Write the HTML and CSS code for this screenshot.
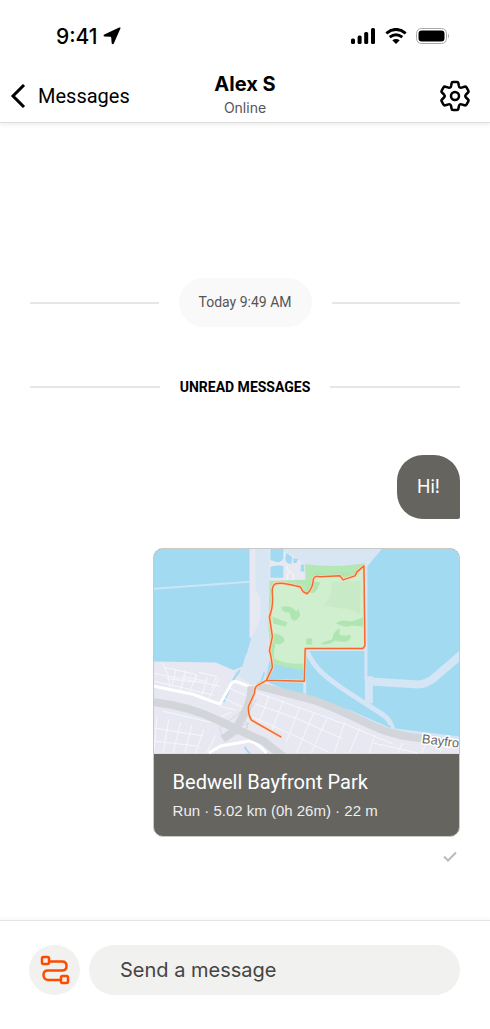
FILE: index.html
```html
<!DOCTYPE html>
<html lang="en">
<head>
<meta charset="utf-8">
<meta name="viewport" content="width=device-width, initial-scale=1">
<title>Alex S – Messages</title>
<link rel="stylesheet" href="styles.css">
</head>
<body>
<div class="screen">
  <header class="top">
    <div class="status">
      <div class="status-group clock">
        <span>9:41</span>
        <svg width="18" height="18" viewBox="0 0 18 18" aria-hidden="true"><path d="M17.500 1.200 10.700 16.800Q9.600 17.800 8.700 16.400L8.200 10.600Q8.100 9.800 7.300 9.800L1.300 9.400Q-.2 8.600 1.300 7.600L16.200.6Q17.900.1 17.500 1.200Z"/></svg>
      </div>
      <div class="status-group">
        <svg width="26" height="16" viewBox="0 0 26 16" aria-hidden="true"><rect x="1" y="10.500" width="4" height="5.500" rx="1.500"/><rect x="7.600" y="7.500" width="4" height="8.500" rx="1.500"/><rect x="14.200" y="4" width="4" height="12" rx="1.500"/><rect x="21" y="0" width="4" height="16" rx="1.500"/></svg>
        <svg class="wifi" width="22" height="16" viewBox="0 0 22 16" aria-hidden="true"><path d="M1.300 5.300Q11-2.400 20.700 5.300M4.700 9.100Q11 4.300 17.300 9.100"/><path class="solid" d="M7.300 12.200Q11 9.600 14.700 12.200L11 16Z"/></svg>
        <svg width="34" height="16" viewBox="0 0 34 16" aria-hidden="true"><rect class="shell" x=".5" y=".5" width="30" height="15" rx="5"/><rect x="2.500" y="2.500" width="26" height="11" rx="3.300"/><path class="tip" d="M32 5.500Q34 8 32 10.500Z"/></svg>
      </div>
    </div>
    <nav class="bar">
      <a class="back" href="#messages">
        <svg width="16" height="24" viewBox="0 0 16 24" aria-hidden="true"><path d="M14 1 3 12 14 23"/></svg>
        <span>Messages</span>
      </a>
      <div class="who"><h1>Alex S</h1><p>Online</p></div>
      <button class="settings" type="button" aria-label="Settings">
        <svg width="30" height="32" viewBox="0 0 30 32" aria-hidden="true"><path d="M13 2H17Q18.200 2 18.400 3.200L18.900 6Q19.400 8.200 21.500 7.600L24.600 6.700Q25.900 6.400 26.500 7.400L28.300 10.600Q28.900 11.600 28 12.500L26 14.500Q24.600 16 26 17.500L28 19.500Q28.900 20.400 28.300 21.400L26.500 24.600Q25.900 25.600 24.600 25.300L21.500 24.400Q19.400 23.800 18.900 26L18.400 28.800Q18.200 30 17 30H13Q11.800 30 11.600 28.800L11.100 26Q10.600 23.800 8.500 24.400L5.400 25.300Q4.100 25.600 3.500 24.600L1.700 21.400Q1.100 20.400 2 19.500L4 17.500Q5.400 16 4 14.500L2 12.500Q1.100 11.600 1.700 10.600L3.500 7.400Q4.100 6.400 5.400 6.700L8.500 7.600Q10.600 8.200 11.100 6L11.600 3.200Q11.800 2 13 2Z"/><circle cx="15" cy="16" r="4"/></svg>
      </button>
    </nav>
  </header>

  <main class="chat">
    <div class="divider"><time class="date">Today 9:49 AM</time></div>
    <div class="divider unread"><h2>UNREAD MESSAGES</h2></div>
    <p class="bubble">Hi!</p>
    <a class="card" href="#activity">
      <svg class="map" viewBox="0 0 307 206" role="img" aria-label="Map of the run">
        <rect class="land" width="307" height="206"/>
        <path class="water" d="M0 0H96V88L94 101 89 118 80 122 62 114 0 113Z"/>
        <path class="channel-fill" d="M102 0H116V32L115 100 119 122 112 134 98 136 80 125 89 118 94 101 99 88 107 70V50L102 40Z"/>
        <path class="channel-fill" d="M122 0H229L212 20 153 17 141 7Z"/>
        <path class="water" d="M117 0H130V9Q128 14 123 13L117 11ZM117 18Q123 16 130 17V29H117ZM133 4 139 8 138 15Q132 15 132 9ZM140 9 145 10 143 14 140 14ZM148 15 151 16V23L147 22ZM229 0H307V189L240 181 197 161 147 148 112 133 116 112 152 100 210 98 212 20Z"/>
        <path class="causeway" d="M0 40 96 33"/>
        <path class="paths" d="M134 31V25L137 23 134 20V17M137 23 140 26V31"/>
        <path class="park-edge" d="M116 32 152 31V15Q165 17 180 17T212 14L213 101H153V122Q137 120 118 115L115 80Z"/>
        <path class="park" d="M121 36Q135 34 147 39L151 46 158 40 161 29 188 28 190 32 203 28 211 18V99H151V115Q135 117 121 110L118 70Z"/>
        <path class="tone" d="M179 33 208 32 207 66Q196 59 190 60L171 57 178 45Z"/>
        <path class="wood" d="M128 58Q138 56 143 63L145 60 147 66Q143 75 138 70L136 64Q128 64 128 58ZM119 68 134 74 132 78 120 75ZM121 85Q132 87 131 93 126 98 120 94ZM157 31 167 34Q163 46 158 44L152 43ZM160 25Q167 20 170 25L168 29 158 30ZM177 24 196 23 197 27 180 28ZM183 75Q187 71 193 72T201 72L210 69V78L198 77Q194 80 183 75ZM167 95Q174 92 179 91 180 82 187 80L186 85Q188 89 197 86 200 89 194 93 188 94 182 92 174 98 167 95ZM153 90H159V96H153ZM118 88 122 96 120 106H117Z"/>
        <g class="channels">
          <path class="w3" d="M151.500 133V147M213 16V131M152 101H213"/>
          <path class="w4" d="M154 103C161 120 173 129 189 140S225 163 232 168C238 172 239 179 241 184"/>
          <path class="w9" d="M216 128 216 155M213 133 262 136Q273 137 281 130L310 105"/>
          <path class="w3" d="M150 149 195 162 235 181 307 190"/>
        </g>
        <path class="creek" d="M97 89 92 106M86 122 80 131 70 154M111 124 107 135M150 146 197 161 238 179M91 199 97 207"/>
        <g class="streets">
          <path d="M8 114 14 126 16 139M22 121 18 138M32 122 26 145M43 127 35 145M54 129 48 147M65 131 55 150M0 125 20 129 67 138M0 133 27 139 60 147M11 119 42 126 41 134 12 130M45 124 63 128 58 140M28 128 52 133"/>
          <path d="M3 168 0 203M15 171 9 205M27 174 19 205M38 177 31 205M50 181 42 205M62 187 53 205M0 180 50 188M0 193 43 198M9 163 56 174 78 164M66 158 82 162M70 150 89 159M76 140 94 148"/>
          <path d="M102 144 159 164 197 178 240 196M100 155 145 171 190 191M99 169 140 187 175 204M116 147 105 176M130 152 118 184M146 160 133 194M161 164 143 205M174 170 158 205M192 174 181 205M207 180 196 205M222 187 216 205M220 195 265 205M250 195 245 205M273 197 269 205M290 200 287 205"/>
        </g>
        <path class="avenue" d="M0 138 39 146 66 156 78 135Q80 132 85 134L98 139M55 205 67 198 96 193Q104 195 113 205"/>
        <path class="ramp" d="M88 163 66 180 69 190Q80 180 95 175 93 183 82 187M103 151 91 172Q96 178 93 181"/>
        <path class="highway" d="M0 154Q35 158 64 172T110 193L133 211M98 138Q98 151 91 165T78 185L69 191M103 137 157 151C185 159 208 174 230 182S274 191 310 196"/>
        <path class="route-halo" d="M128 189 98 172Q94 166 95 158L101 145Q101 139 104 137L113 132 119 119Q118 108 116 102L119 88 116 68Q120 58 119 46 118 37 122 35 128 33 142 37L147 38 150 43 154 45Q160 39 160 31 161 26 167 28L187 27 190 31 202 27 204 23 211 17 212 97 210 100H152L151 133 113 132"/>
        <path class="route" d="M128 189 98 172Q94 166 95 158L101 145Q101 139 104 137L113 132 119 119Q118 108 116 102L119 88 116 68Q120 58 119 46 118 37 122 35 128 33 142 37L147 38 150 43 154 45Q160 39 160 31 161 26 167 28L187 27 190 31 202 27 204 23 211 17 212 97 210 100H152L151 133 113 132"/>
        <text class="road-name" transform="translate(269 195) rotate(7)">Bayfro</text>
      </svg>
      <div class="card-body">
        <h3>Bedwell Bayfront Park</h3>
        <p>Run · 5.02 km (0h 26m) · 22 m</p>
      </div>
    </a>
    <svg class="sent" width="14" height="12" viewBox="0 0 14 12" role="img" aria-label="Sent"><path d="M1 5.500 5 9.500 13 1.500"/></svg>
  </main>

  <form class="composer">
    <button class="attach" type="button" aria-label="Share a route">
      <svg width="30" height="30" viewBox="0 0 30 30" aria-hidden="true"><path d="M9 6.500H22Q26.500 6.500 26.500 11T22 15.500H8Q3.500 15.500 3.500 20T8 25H20"/><rect x="2" y="2" width="7" height="7" rx="1.500"/><rect x="21" y="21" width="7" height="7" rx="1.500"/></svg>
    </button>
    <input class="message" type="text" placeholder="Send a message" aria-label="Send a message">
  </form>
</div>
</body>
</html>
```
FILE: styles.css
```css
* { box-sizing: border-box; }
body { margin: 0; background: #fff; color: #000; font-family: Roboto, "Liberation Sans", sans-serif; }
h1, h2, h3, p { margin: 0; }
button { border: 0; padding: 0; cursor: pointer; }
a { color: inherit; text-decoration: none; }
svg { display: block; }

.screen { display: flex; flex-direction: column; min-height: 100vh; }

.top { border-bottom: 1px solid #dedede; box-shadow: 0 2px 4px #00000012; }
.status { display: flex; justify-content: space-between; align-items: center; height: 72px; padding: 0 40px 0 56px; }
.status-group { display: flex; align-items: center; gap: 9px; }
.clock { gap: 5px; font-family: Inter, sans-serif; font-size: 21px; font-weight: 500; }
.wifi { fill: none; stroke: #000; stroke-width: 3; }
.wifi .solid { fill: #000; stroke: none; }
.shell { fill: none; stroke: #aaa9a5; }
.tip { fill: #aaa9a5; }

.bar { display: grid; grid-template-columns: 1fr auto 1fr; align-items: center; height: 50px; padding: 0 10px 6px; }
.back { display: flex; align-items: center; gap: 12px; font-size: 20px; }
.back svg { fill: none; stroke: #000; stroke-width: 3; }
.who { text-align: center; font-family: Inter, sans-serif; }
.who h1 { font-size: 20px; line-height: 24px; font-weight: 700; }
.who p { color: #555; font-size: 14px; line-height: 24px; }
.settings { justify-self: end; padding-right: 10px; background: none; }
.settings svg { fill: none; stroke: #000; stroke-width: 2.5; stroke-linejoin: round; }

.chat { flex: 1; display: flex; flex-direction: column; padding: 155px 30px 0; }
.divider { display: flex; align-items: center; gap: 20px; }
.divider::before, .divider::after { content: ""; flex: 1; height: 2px; background: #e6e6e6; }
.date { padding: 0 20px; border-radius: 25px; background: #f9f9f9; color: #555; font-size: 14px; line-height: 49px; }
.unread { margin-top: 48px; }
.unread h2 { font-size: 14px; line-height: 24px; font-weight: 700; }
.bubble { align-self: flex-end; margin-top: 56px; padding: 0 20px; border-radius: 26px 26px 2px 26px; background: #65645f; color: #fff; font-family: Inter, sans-serif; font-size: 18px; line-height: 64px; }
.card { align-self: flex-end; width: 71.5%; margin-top: 29px; overflow: hidden; border: 1px solid #c9c9c7; border-radius: 10px; background: #65645f; color: #fff; }
.map { width: 100%; }
.card-body { padding: 14px 19px 10px; }
.card-body h3 { font-size: 20px; line-height: 28px; font-weight: 400; }
.card-body p { color: #eee; font-family: "Liberation Sans", Arial, sans-serif; font-size: 15px; line-height: 30px; }
.sent { align-self: flex-end; margin: 14px 3px 0; fill: none; stroke: #bbb; stroke-width: 2; }

.land { fill: #e8e8f2; }
.water { fill: #a2daf2; }
.channel-fill { fill: #d8e6f4; }
.causeway { fill: none; stroke: #cbe5f4; stroke-width: 2; }
.paths { fill: none; stroke: #f7f7fa; }
.park-edge { fill: #b4e7b6; }
.park { fill: #d0efce; }
.tone { fill: #c8eac6; }
.wood { fill: #aee5b1; }
.channels { fill: none; stroke: #d4e5f5; stroke-linejoin: round; }
.w3 { stroke-width: 3; }
.w4 { stroke-width: 5; }
.w9 { stroke-width: 8; }
.creek { fill: none; stroke: #a2daf2; stroke-width: 2; }
.streets { fill: none; stroke: #f6f6fa; stroke-width: 1; }
.avenue { fill: none; stroke: #fff; stroke-width: 3; stroke-linejoin: round; }
.ramp { fill: none; stroke: #d5d8df; stroke-width: 1; }
.highway { fill: none; stroke: #d2d5da; stroke-width: 8; }
.route-halo { fill: none; stroke: #fbd9ba; stroke-width: 3; stroke-linejoin: round; }
.route { fill: none; stroke: #f4692f; stroke-width: 1.5; stroke-linejoin: round; }
.road-name { fill: #666; stroke: #fff; stroke-width: 3; paint-order: stroke; font-size: 13px; font-family: "Liberation Sans", sans-serif; }

.composer { display: flex; align-items: center; gap: 9px; padding: 24px 30px 34px 29px; border-top: 1px solid #e4e4e4; box-shadow: 0 -2px 4px #00000008; }
.attach { display: grid; place-items: center; flex: none; width: 51px; height: 50px; border-radius: 50%; background: #f1f1ef; }
.attach svg { fill: none; stroke: #fc4c02; stroke-width: 2.5; }
.attach rect { fill: #f1f1ef; }
.message { flex: 1; min-width: 0; height: 50px; padding: 0 31px; border: 0; border-radius: 25px; background: #f1f1ef; color: #444; font: 20px Inter, "Liberation Sans", sans-serif; }
.message::placeholder { color: #444; opacity: 1; }
```
